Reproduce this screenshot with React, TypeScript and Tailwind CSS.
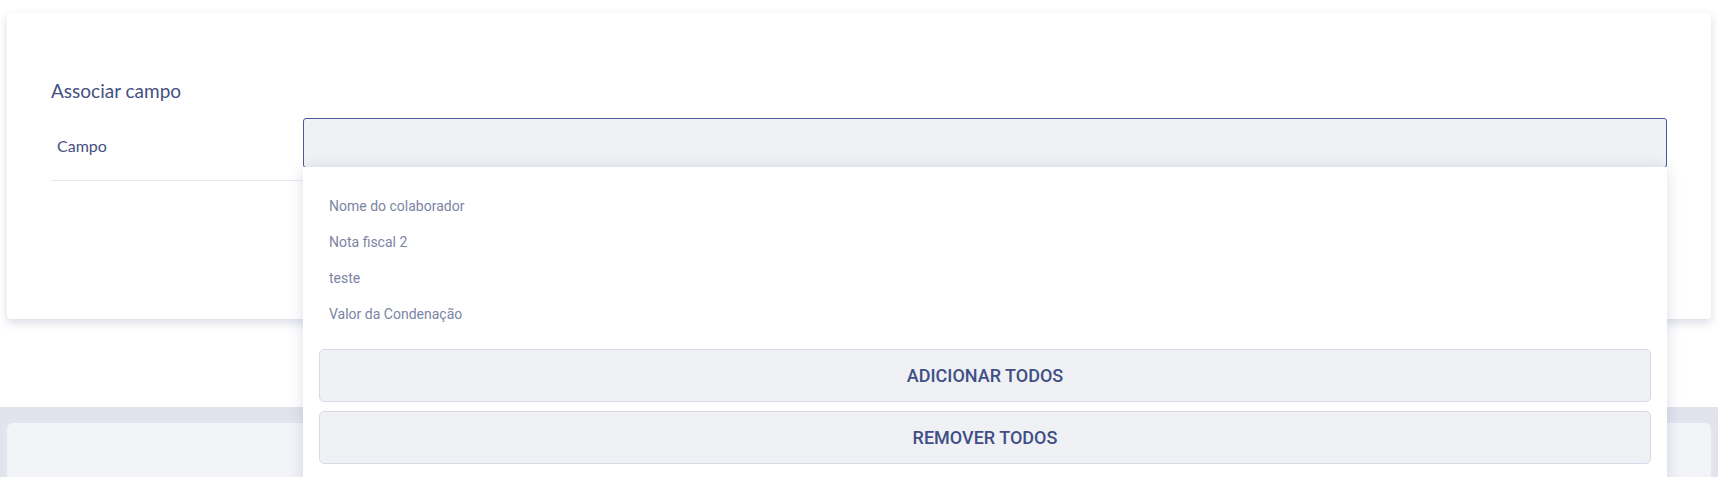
import React from 'react';

const fields = ['Nome do colaborador', 'Nota fiscal 2', 'teste', 'Valor da Condenação'];

const App: React.FC = () => {
  return (
    <div className="relative h-[477px] overflow-hidden bg-white font-['Lato',sans-serif]">
      <div className="px-[7px] pt-[13px]">
        <div className="h-[306px] rounded-[4px] bg-white px-[44px] pt-[66px] shadow-[0_4px_10px_rgba(70,80,130,0.2)]">
          <h3 className="text-[19px] leading-[24px] text-[#44507f]">Associar campo</h3>

          <div className="mt-[15px] flex border-b border-[#e6e8ef] pb-[12px]">
            <label className="flex w-[252px] shrink-0 items-center pl-[6px] pt-[6px] text-[16px] text-[#44507f]">
              Campo
            </label>
            <div className="relative flex-1">
              <div className="h-[50px] rounded-[3px] border border-[#4a5a9a] bg-[#f0f1f5]" />

              {/* menu aberto, cobre a borda de baixo do campo */}
              <div className="absolute left-0 right-0 top-[49px] z-10 bg-white pb-[40px] pt-[21px] font-['Roboto',sans-serif] shadow-[0_2px_14px_rgba(70,80,130,0.18)]">
                <ul>
                  {fields.map((f) => (
                    <li key={f} className="flex h-[36px] items-center px-[26px] text-[14px] text-[#7c84a3]">
                      {f}
                    </li>
                  ))}
                </ul>
                <div className="mt-[17px] flex flex-col gap-[9px] px-[16px]">
                  <button className="h-[53px] rounded-[5px] border border-[#d8dbe7] bg-[#f0f1f5] text-[18px] font-medium text-[#3f4f85]">
                    ADICIONAR TODOS
                  </button>
                  <button className="h-[53px] rounded-[5px] border border-[#d8dbe7] bg-[#f0f1f5] text-[18px] font-medium text-[#3f4f85]">
                    REMOVER TODOS
                  </button>
                </div>
              </div>
            </div>
          </div>
        </div>
      </div>

      <div className="mt-[88px] h-[80px] bg-[#e1e3eb] px-[7px] pt-[16px]">
        <div className="h-full rounded-[6px] bg-[#f3f4f8] shadow-[0_0_8px_5px_rgba(228,230,238,0.95)]" />
      </div>
    </div>
  );
};

export default App;
